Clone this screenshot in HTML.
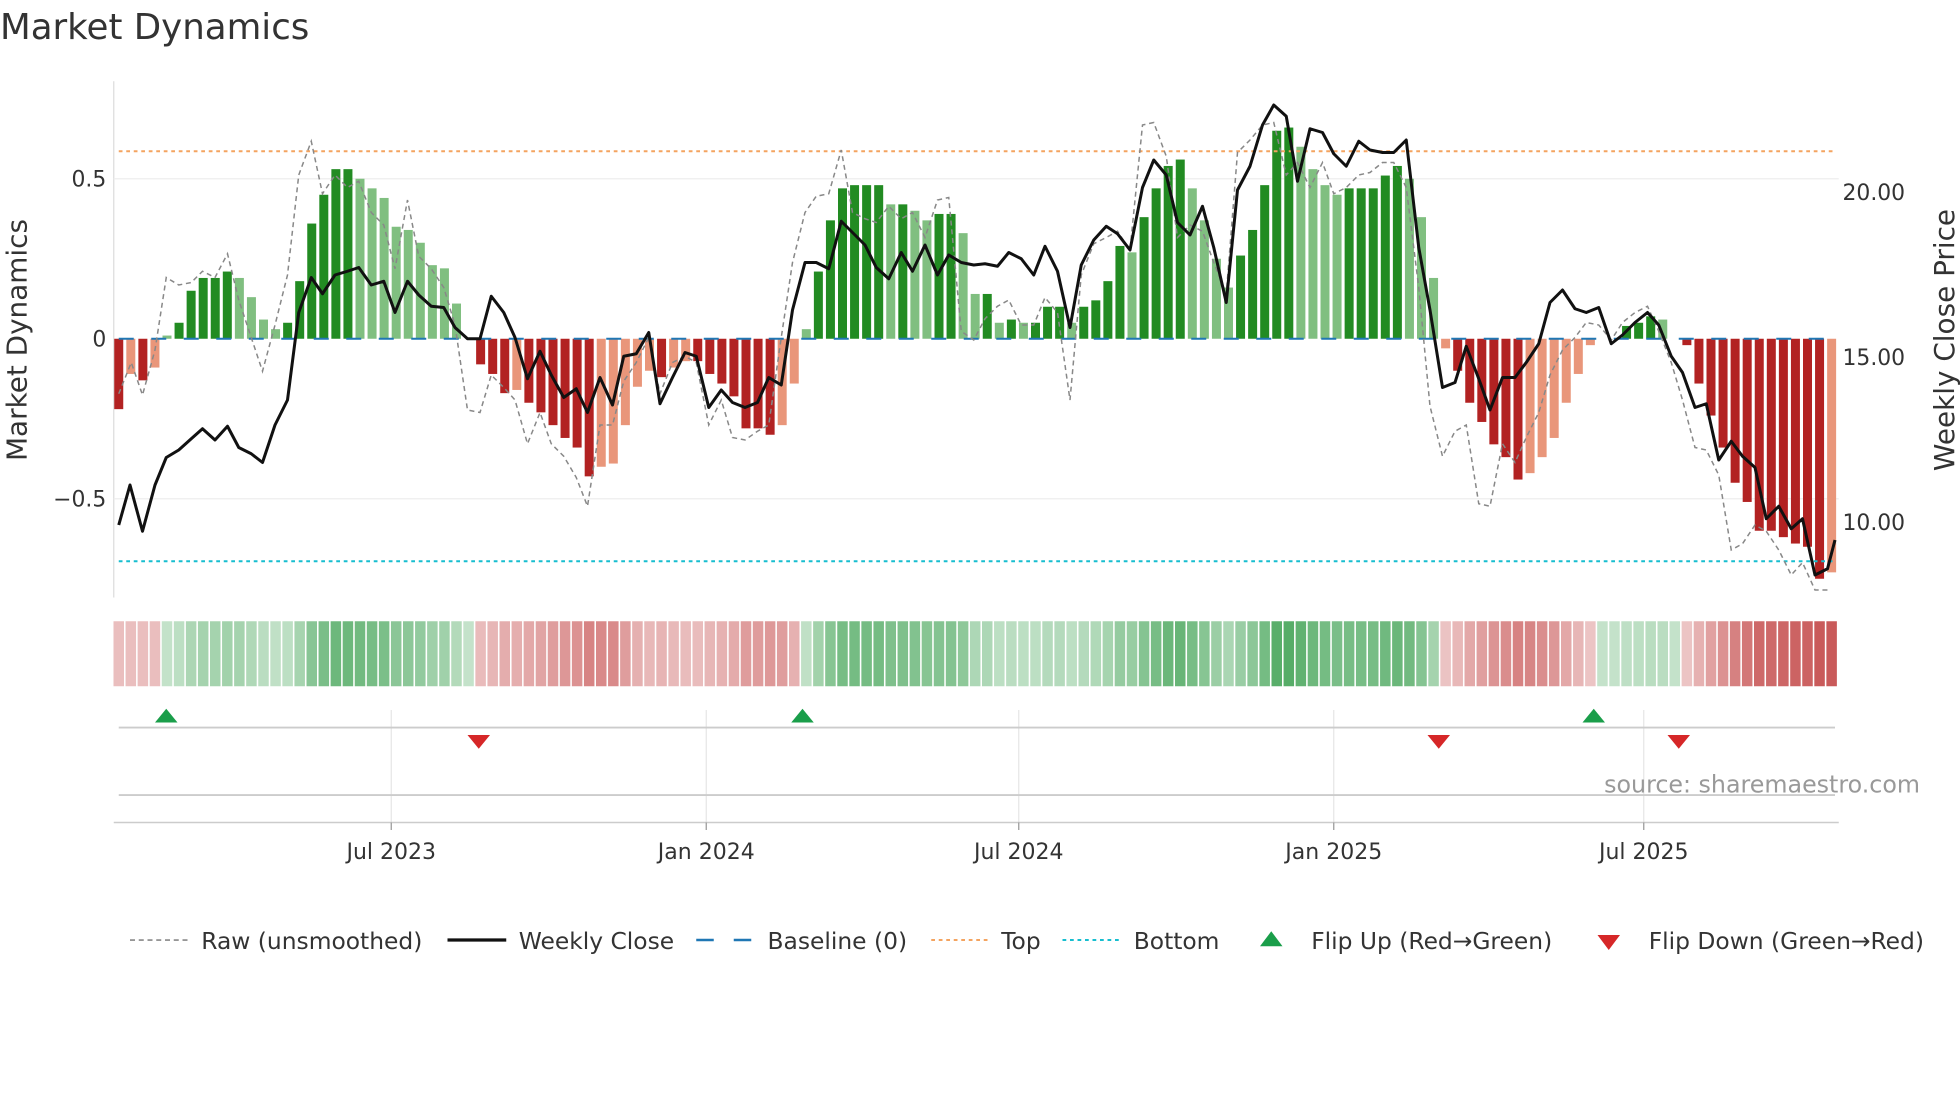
<!DOCTYPE html>
<html><head><meta charset="utf-8"><style>
html,body{margin:0;padding:0;background:#fff;}
svg{display:block;font-family:"DejaVu Sans","Liberation Sans",sans-serif;}
</style></head><body>
<svg id="s" width="1960" height="1102" viewBox="0 0 1568 881.6" xmlns="http://www.w3.org/2000/svg">
<rect width="1568" height="882" fill="#fff"/>
<text x="0" y="31" font-size="28.5" fill="#333">Market Dynamics</text>
<line x1="91" y1="65" x2="91" y2="478" stroke="#ddd" stroke-width="1"/>
<line x1="91" y1="143" x2="1471" y2="143" stroke="#eee" stroke-width="1"/>
<line x1="91" y1="399" x2="1471" y2="399" stroke="#eee" stroke-width="1"/>
<g id="bars"></g>
<line x1="95" y1="121" x2="1466" y2="121" stroke="#f4a460" stroke-width="1.6" stroke-dasharray="3,3"/>
<line x1="95" y1="449" x2="1466" y2="449" stroke="#17becf" stroke-width="1.6" stroke-dasharray="3,3"/>
<line x1="95" y1="271" x2="1466" y2="271" stroke="#1f77b4" stroke-width="1.6" stroke-dasharray="12,14"/>
<polyline id="raw" fill="none" stroke="#888" stroke-width="1.2" stroke-dasharray="4,3"/>
<polyline id="close" fill="none" stroke="#111" stroke-width="2.4" stroke-linejoin="round"/>
<g font-size="17.5" fill="#333">
<text x="85" y="149" text-anchor="end">0.5</text>
<text x="85" y="277" text-anchor="end">0</text>
<text x="85" y="405" text-anchor="end">−0.5</text>
<text x="1474" y="160">20.00</text>
<text x="1474" y="292">15.00</text>
<text x="1474" y="424">10.00</text>
</g>
<text transform="translate(21,272) rotate(-90)" font-size="22.3" fill="#333" text-anchor="middle">Market Dynamics</text>
<text transform="translate(1563,272) rotate(-90)" font-size="22.3" fill="#333" text-anchor="middle">Weekly Close Price</text>
<g id="heat"></g>
<g stroke="#e6e6e6" stroke-width="1">
<line x1="313" y1="568" x2="313" y2="658"/><line x1="565" y1="568" x2="565" y2="658"/>
<line x1="815" y1="568" x2="815" y2="658"/><line x1="1067" y1="568" x2="1067" y2="658"/>
<line x1="1315" y1="568" x2="1315" y2="658"/>
</g>
<line x1="95" y1="582" x2="1468" y2="582" stroke="#ccc" stroke-width="1.5"/>
<line x1="95" y1="636" x2="1468" y2="636" stroke="#ccc" stroke-width="1.5"/>
<line x1="91" y1="658" x2="1471" y2="658" stroke="#ccc" stroke-width="1.2"/>
<g stroke="#999"><line x1="313" y1="658" x2="313" y2="664"/><line x1="565" y1="658" x2="565" y2="664"/><line x1="815" y1="658" x2="815" y2="664"/><line x1="1067" y1="658" x2="1067" y2="664"/><line x1="1315" y1="658" x2="1315" y2="664"/></g>
<g fill="#1a9e4a"><path d="M124,578 L133,567 L142,578Z"/><path d="M633,578 L642,567 L651,578Z"/><path d="M1266,578 L1275,567 L1284,578Z"/></g>
<g fill="#d62728"><path d="M374,588 L383,599 L392,588Z"/><path d="M1142,588 L1151,599 L1160,588Z"/><path d="M1334,588 L1343,599 L1352,588Z"/></g>
<text x="1536" y="634" font-size="19" fill="#999" text-anchor="end">source: sharemaestro.com</text>
<g font-size="17.6" fill="#333" text-anchor="middle">
<text x="313" y="687">Jul 2023</text><text x="565" y="687">Jan 2024</text><text x="815" y="687">Jul 2024</text><text x="1067" y="687">Jan 2025</text><text x="1315" y="687">Jul 2025</text>
</g>
<g font-size="18.7" fill="#333">
<line x1="104" y1="752" x2="150" y2="752" stroke="#888" stroke-width="1.3" stroke-dasharray="4,3"/>
<text x="161" y="759">Raw (unsmoothed)</text>
<line x1="358" y1="752" x2="405" y2="752" stroke="#111" stroke-width="2.6"/>
<text x="415" y="759">Weekly Close</text>
<line x1="557" y1="752" x2="603" y2="752" stroke="#1f77b4" stroke-width="2" stroke-dasharray="14,16"/>
<text x="614" y="759">Baseline (0)</text>
<line x1="745" y1="752" x2="790" y2="752" stroke="#f4a460" stroke-width="1.6" stroke-dasharray="3,3"/>
<text x="801" y="759">Top</text>
<line x1="850" y1="752" x2="896" y2="752" stroke="#17becf" stroke-width="1.6" stroke-dasharray="3,3"/>
<text x="907" y="759">Bottom</text>
<path d="M1008,757 L1017,745 L1026,757Z" fill="#1a9e4a"/>
<text x="1049" y="759">Flip Up (Red→Green)</text>
<path d="M1278,748 L1287,760 L1296,748Z" fill="#d62728"/>
<text x="1319" y="759">Flip Down (Green→Red)</text>
</g>
</svg>
<script>
var V=[-0.22,-0.11,-0.13,-0.09,0.01,0.05,0.15,0.19,0.19,0.21,0.19,0.13,0.06,0.03,0.05,0.18,0.36,0.45,0.53,0.53,0.5,0.47,0.44,0.35,0.34,0.3,0.23,0.22,0.11,0.0,-0.08,-0.11,-0.17,-0.16,-0.2,-0.23,-0.27,-0.31,-0.34,-0.43,-0.4,-0.39,-0.27,-0.15,-0.1,-0.12,-0.09,-0.07,-0.07,-0.11,-0.14,-0.18,-0.28,-0.28,-0.3,-0.27,-0.14,0.03,0.21,0.37,0.47,0.48,0.48,0.48,0.42,0.42,0.4,0.37,0.39,0.39,0.33,0.14,0.14,0.05,0.06,0.05,0.05,0.1,0.1,0.05,0.1,0.12,0.18,0.29,0.27,0.38,0.47,0.54,0.56,0.47,0.37,0.25,0.16,0.26,0.34,0.48,0.65,0.66,0.6,0.53,0.48,0.45,0.47,0.47,0.47,0.51,0.54,0.5,0.38,0.19,-0.03,-0.1,-0.2,-0.26,-0.33,-0.37,-0.44,-0.42,-0.37,-0.31,-0.2,-0.11,-0.02,0,0,0.04,0.05,0.07,0.06,0,-0.02,-0.14,-0.24,-0.34,-0.45,-0.51,-0.6,-0.6,-0.62,-0.64,-0.65,-0.75,-0.73];
var NS="http://www.w3.org/2000/svg",b=document.getElementById('bars'),h=document.getElementById('heat');
function el(t,a,p){var e=document.createElementNS(NS,t);for(var k in a)e.setAttribute(k,a[k]);p.appendChild(e);}
for(var i=0;i<V.length;i++){var v=V[i],x=95+9.65*i,prev=i>0?V[i-1]:v;
 var dark=Math.abs(v)>=Math.abs(prev)-0.005;var c;
 if(v>=0)c=dark?'#228b22':'#80bf80';else c=dark?'#b22222':'#e9967a';
 var y0=271,y1=271-v*256;if(Math.abs(v)>0.004)el('rect',{x:x-3.6,y:Math.min(y0,y1),width:7.2,height:Math.abs(y1-y0),fill:c},b);
 var a=0.3+Math.min(Math.abs(v),0.7)*0.85;var hc=v>=0?'rgba(60,160,80,'+a+')':'rgba(195,70,70,'+a+')';
 if(i<4)hc='rgba(195,70,70,0.35)';
 el('rect',{x:x-4.2,y:497,width:8.4,height:52,fill:hc},h);}
document.getElementById('close').setAttribute('points',"95,420 104,388 114,425 124,388 133,366 143,360 153,351 162,343 172,352 182,341 191,358 201,363 210,370 220,340 230,320 239,250 249,222 258,235 268,220 278,217 287,214 297,228 307,225 316,250 326,225 335,236 345,245 355,246 364,262 374,271 384,271 393,237 403,250 412,270 422,303 432,281 441,300 451,318 461,311 470,330 480,302 490,324 499,285 509,283 519,266 528,323 538,302 548,282 557,285 567,326 577,312 586,322 596,326 606,322 615,302 625,308 634,248 644,210 653,210 663,215 673,177 682,186 692,196 701,214 711,223 721,202 730,217 740,196 750,220 759,204 769,210 779,212 788,211 798,213 807,202 817,207 827,220 836,197 846,217 856,262 865,212 875,192 885,181 894,187 904,200 914,150 923,128 933,140 942,178 952,188 962,165 971,198 981,242 990,152 1000,133 1010,100 1019,84 1029,93 1038,145 1048,103 1058,106 1067,123 1077,133 1087,113 1096,120 1106,122 1115,122 1125,112 1135,198 1144,248 1154,310 1164,306 1173,277 1183,303 1192,328 1202,302 1212,302 1221,290 1231,275 1240,242 1250,232 1260,247 1269,250 1279,246 1289,275 1298,268 1308,258 1318,250 1327,260 1337,285 1346,298 1356,326 1365,323 1375,368 1385,353 1394,365 1404,374 1413,415 1423,405 1433,423 1442,415 1452,460 1462,455 1468,432");
document.getElementById('raw').setAttribute('points',"95,315 105,290 114,316 124,280 133,222 143,228 153,226 162,217 172,222 182,203 191,240 201,270 210,297 220,260 230,220 239,140 249,113 258,155 268,140 278,150 287,145 297,170 307,180 316,215 326,160 335,205 345,215 355,230 364,260 374,328 384,330 393,300 403,310 412,320 422,355 432,330 441,355 451,365 461,382 470,405 480,340 490,340 499,305 509,290 519,270 528,315 538,290 548,285 557,290 567,340 577,320 586,350 596,352 606,345 615,340 625,270 634,210 644,170 653,157 663,155 673,120 682,170 692,175 701,178 711,165 721,175 730,170 740,190 750,160 759,158 769,265 779,272 788,255 798,245 807,240 817,260 827,260 836,238 846,250 856,320 865,220 875,195 885,190 894,185 904,200 914,100 923,98 933,125 942,190 952,180 962,185 971,210 981,235 990,122 1000,112 1010,100 1019,98 1029,140 1038,130 1048,150 1058,130 1067,155 1077,150 1087,140 1096,138 1106,130 1115,130 1125,150 1135,230 1144,325 1154,365 1164,345 1173,340 1183,403 1192,405 1202,355 1212,370 1221,350 1231,330 1240,300 1250,280 1260,270 1269,258 1279,260 1289,272 1298,258 1308,250 1318,245 1327,265 1337,290 1346,320 1356,358 1365,360 1375,380 1385,440 1394,435 1404,420 1413,425 1423,440 1433,460 1442,450 1452,472 1462,472");
</script>
</body></html>
